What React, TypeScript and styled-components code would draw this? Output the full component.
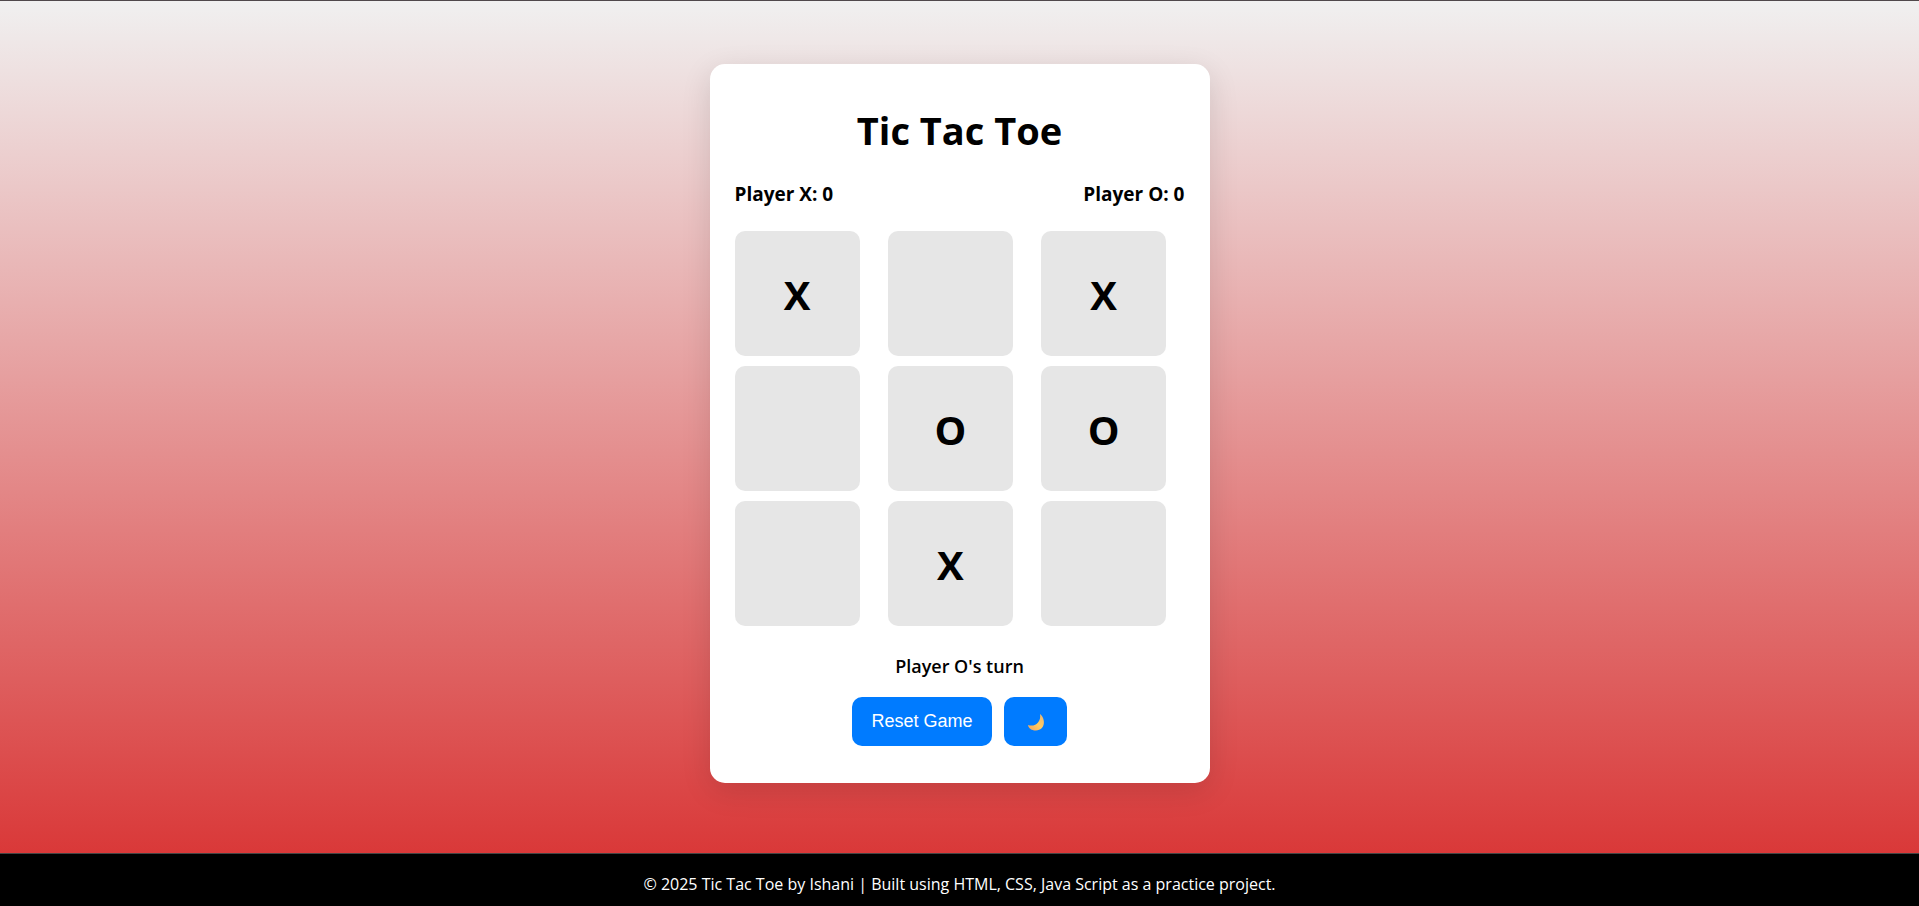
import React, { useState } from "react";
import styled, { createGlobalStyle } from "styled-components";

const GlobalStyle = createGlobalStyle`
  * { box-sizing: border-box; }
  body {
    margin: 0;
    color: #000;
    font-family: "Segoe UI", "Open Sans", sans-serif;
  }
`;

const Page = styled.div`
  min-height: 100vh;
  display: flex;
  flex-direction: column;
  border-top: 1px solid #50484b;
  background: linear-gradient(to bottom, #f0f0f0, #d82d2d);
`;

const Main = styled.main`
  flex: 1;
  display: flex;
  justify-content: center;
  align-items: center;
  padding: 20px 20px 28px;
`;

const Card = styled.section`
  width: 100%;
  max-width: 500px;
  padding: 36px 25px 37px;
  border-radius: 15px;
  background: #fff;
  box-shadow: 0 8px 30px rgba(0, 0, 0, 0.12);
  text-align: center;
`;

const Title = styled.h1`
  margin: 0;
  font-size: 38px;
  font-weight: 700;
  line-height: 60px;
`;

const Scores = styled.div`
  display: flex;
  justify-content: space-between;
  margin: 21px 0 23px;
  font-size: 19px;
  font-weight: 700;
  line-height: 27px;
`;

const Board = styled.div`
  display: grid;
  grid-template-columns: repeat(3, 1fr);
  gap: 10px;
`;

const Cell = styled.button`
  width: 125px;
  max-width: 100%;
  height: 125px;
  padding: 2px 0 0;
  border: 0;
  border-radius: 10px;
  background: #e6e6e6;
  color: #000;
  font: 700 40px "Segoe UI", "Open Sans", sans-serif;
  cursor: pointer;
`;

const Status = styled.p`
  margin: 27px 0 17px;
  font-size: 18px;
  font-weight: 600;
  line-height: 27px;
`;

const Controls = styled.div`
  display: flex;
  justify-content: center;
  gap: 12px;
`;

const ControlButton = styled.button`
  display: flex;
  align-items: center;
  height: 49px;
  padding: 0 19px;
  border: 0;
  border-radius: 10px;
  background: #007bff;
  color: #fff;
  font: 18px "Liberation Sans", Arial, sans-serif;
  cursor: pointer;
`;

const MoonIcon = styled.svg`
  width: 25px;
  height: 22px;
`;

const Footer = styled.footer`
  padding: 15px 20px 7px;
  border-top: 1px solid #444;
  background: #000;
  color: #fff;
  font-size: 16px;
  line-height: 30px;
  text-align: center;
`;

type Mark = "X" | "O" | "";
const START: Mark[] = ["X", "", "X", "", "O", "O", "", "X", ""];

export default function App() {
  const [cells, setCells] = useState<Mark[]>(START);
  const [turn, setTurn] = useState<"X" | "O">("O");

  const play = (index: number) => {
    if (cells[index]) return;
    setCells(cells.map((mark, i) => (i === index ? turn : mark)));
    setTurn(turn === "X" ? "O" : "X");
  };

  const reset = () => {
    setCells(Array<Mark>(9).fill(""));
    setTurn("X");
  };

  return (
    <>
      <GlobalStyle />
      <Page>
        <Main>
          <Card>
            <Title>Tic Tac Toe</Title>
            <Scores>
              <span>Player X: 0</span>
              <span>Player O: 0</span>
            </Scores>
            <Board>
              {cells.map((mark, i) => (
                <Cell key={i} type="button" aria-label={`Cell ${i + 1} ${mark}`} onClick={() => play(i)}>
                  {mark}
                </Cell>
              ))}
            </Board>
            <Status>Player {turn}'s turn</Status>
            <Controls>
              <ControlButton type="button" onClick={reset}>Reset Game</ControlButton>
              <ControlButton type="button" aria-label="Toggle dark mode">
                <MoonIcon viewBox="0 0 25 22" aria-hidden="true">
                  <defs>
                    <linearGradient id="moon" x1="0" y1="1" x2="1" y2="0">
                      <stop offset="0" stopColor="#f2a25c" />
                      <stop offset="0.5" stopColor="#ffcb62" />
                      <stop offset="1" stopColor="#e8b476" />
                    </linearGradient>
                  </defs>
                  <path d="M17 4C23 9 22.500 20 13 20.500C9 20.700 5.500 18.500 5 15C12 17.500 18.500 12 17 4Z" fill="url(#moon)" />
                </MoonIcon>
              </ControlButton>
            </Controls>
          </Card>
        </Main>
        <Footer>© 2025 Tic Tac Toe by Ishani | Built using HTML, CSS, Java Script as a practice project.</Footer>
      </Page>
    </>
  );
}
